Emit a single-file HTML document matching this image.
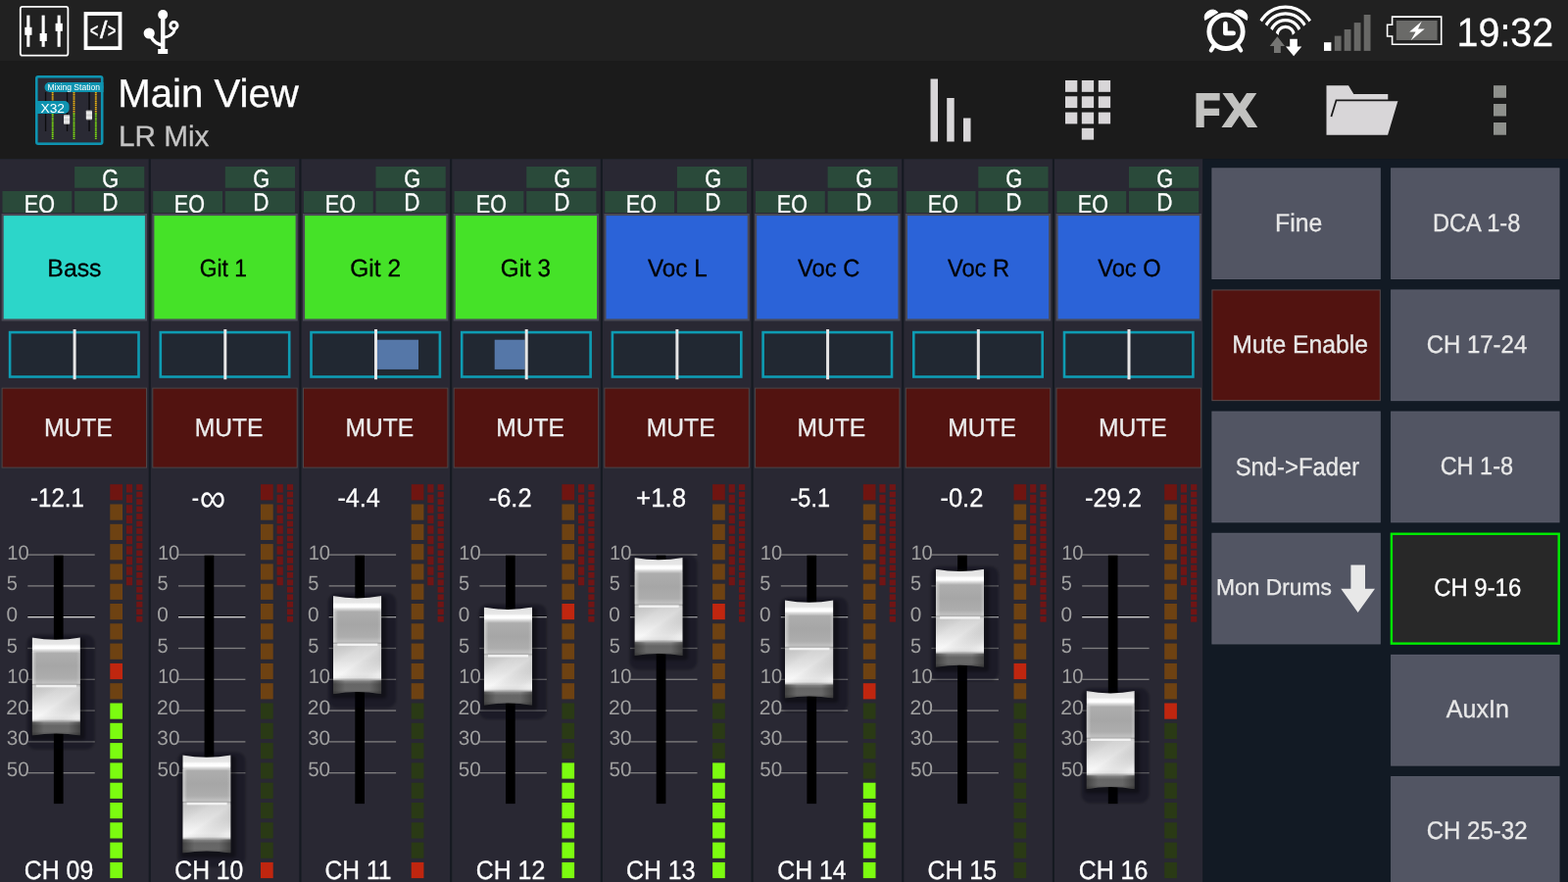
<!DOCTYPE html>
<html lang="en"><head><meta charset="utf-8"><title>Main View - LR Mix</title>
<style>
*{margin:0;padding:0;box-sizing:border-box}
html,body{width:1600px;height:900px;overflow:hidden;background:#121a24}
body{font-family:"Liberation Sans",sans-serif;position:relative;color:#fff}
.a{position:absolute}
.t{position:absolute;white-space:nowrap;line-height:1;transform-origin:0 0;-webkit-text-stroke:0.3px currentColor;text-rendering:geometricPrecision}
#all{position:absolute;left:0;top:0;width:1600px;height:900px;will-change:transform;overflow:hidden}
</style></head>
<body>
<div id="all">
<svg class="a" style="left:0;top:0" width="1600" height="900" viewBox="0 0 1600 900">
<defs>
<linearGradient id="kg" x1="0" y1="0" x2="0" y2="1">
<stop offset="0" stop-color="#c4c4c4"/><stop offset="0.025" stop-color="#e4e4e4"/><stop offset="0.07" stop-color="#e6e6e6"/><stop offset="0.09" stop-color="#fcfcfc"/><stop offset="0.115" stop-color="#ffffff"/>
<stop offset="0.135" stop-color="#dcdcdc"/><stop offset="0.165" stop-color="#adadad"/><stop offset="0.3" stop-color="#a6a6a6"/><stop offset="0.42" stop-color="#adadad"/>
<stop offset="0.465" stop-color="#c0c0c0"/><stop offset="0.485" stop-color="#a8a8a8"/><stop offset="0.495" stop-color="#d0d0d0"/><stop offset="0.52" stop-color="#cecece"/>
<stop offset="0.66" stop-color="#dedede"/><stop offset="0.8" stop-color="#f6f6f6"/><stop offset="0.835" stop-color="#f0f0f0"/><stop offset="0.87" stop-color="#808080"/>
<stop offset="0.9" stop-color="#666666"/><stop offset="0.96" stop-color="#686868"/><stop offset="1" stop-color="#505050"/>
</linearGradient>
<linearGradient id="kh" x1="0" y1="0" x2="1" y2="0">
<stop offset="0" stop-color="#fff" stop-opacity="0.45"/><stop offset="0.1" stop-color="#fff" stop-opacity="0"/><stop offset="0.92" stop-color="#fff" stop-opacity="0"/><stop offset="1" stop-color="#fff" stop-opacity="0.25"/>
</linearGradient>
<linearGradient id="kd" x1="0" y1="0" x2="1" y2="0">
<stop offset="0" stop-color="#000" stop-opacity="0.35"/><stop offset="0.25" stop-color="#000" stop-opacity="0"/><stop offset="0.75" stop-color="#000" stop-opacity="0"/><stop offset="1" stop-color="#000" stop-opacity="0.35"/>
</linearGradient>
<linearGradient id="kl" x1="0" y1="0" x2="1" y2="1">
<stop offset="0" stop-color="#000" stop-opacity="0.04"/><stop offset="0.3" stop-color="#fff" stop-opacity="0.1"/><stop offset="0.5" stop-color="#fff" stop-opacity="0.16"/><stop offset="0.8" stop-color="#000" stop-opacity="0.07"/><stop offset="1" stop-color="#fff" stop-opacity="0.08"/>
</linearGradient>
<filter id="kb" x="-30%" y="-20%" width="160%" height="140%"><feGaussianBlur stdDeviation="1.6"/></filter>
<filter id="kb2" x="-30%" y="-20%" width="160%" height="140%"><feGaussianBlur stdDeviation="0.9"/></filter>
<clipPath id="kc"><path d="M14.4 8Q14 8 14 8.4Q38.7 13 63.4 8.4Q63.4 8 63 8 63.4 8 63.4 8.4V108.1Q63.4 108.5 63 108.5Q38.7 104.3 14.4 108.5Q14 108.5 14 108.1V8.4Z"/></clipPath>
<g id="knob">
<rect x="9" y="5.4" width="69.2" height="117.4" rx="9" fill="#060608" opacity="0.3" filter="url(#kb2)"/>
<rect x="12.5" y="9" width="56" height="104" rx="3" fill="#000" opacity="0.36" filter="url(#kb)"/>
<g clip-path="url(#kc)">
<rect x="14" y="8" width="49.4" height="100.5" fill="url(#kg)"/>
<rect x="14" y="23" width="49.4" height="33" fill="url(#kh)"/>
<rect x="14" y="59" width="49.4" height="35" fill="url(#kl)"/>
<rect x="14" y="94.5" width="49.4" height="14" fill="url(#kd)"/>
<rect x="18.4" y="56.8" width="41" height="2.5" fill="#fff" opacity="0.72"/>
</g>
</g>
</defs>
<rect x="0.00" y="0.00" width="1600.00" height="62.00" fill="#212121"/>
<rect x="0.00" y="62.00" width="1600.00" height="100.20" fill="#1b1b1b"/>
<rect x="0.00" y="162.20" width="1227.40" height="738.00" fill="#292833"/>
<rect x="1227.40" y="162.20" width="372.60" height="738.00" fill="#121a24"/>
<rect x="151.70" y="162.20" width="2.10" height="738.00" fill="#151a21"/>
<rect x="76.10" y="170.00" width="71.20" height="21.70" fill="#2a4a3a"/>
<rect x="76.10" y="195.00" width="71.20" height="22.00" fill="#2a4a3a"/>
<rect x="2.50" y="195.00" width="70.80" height="22.00" fill="#2a4a3a"/>
<rect x="1.60" y="218.00" width="148.40" height="109.50" fill="#4a4a56"/>
<rect x="3.70" y="220.10" width="144.20" height="105.30" fill="#2cd6c9"/>
<rect x="8.80" y="337.80" width="134.00" height="48.00" fill="#0e9cb3"/>
<rect x="11.40" y="340.40" width="128.80" height="42.80" fill="#212832"/>
<rect x="74.60" y="336.00" width="3.00" height="51.20" fill="#e6e6e6"/>
<rect x="1.60" y="395.60" width="148.40" height="82.00" fill="#4c4648"/>
<rect x="2.60" y="396.60" width="146.40" height="80.00" fill="#521310"/>
<rect x="28.30" y="565.45" width="68.40" height="1.30" fill="#807f80"/>
<rect x="28.30" y="597.25" width="68.40" height="1.30" fill="#807f80"/>
<rect x="28.30" y="628.00" width="68.40" height="1.10" fill="#101014"/>
<rect x="28.30" y="629.05" width="68.40" height="1.30" fill="#d8d8d8"/>
<rect x="28.30" y="660.85" width="68.40" height="1.30" fill="#807f80"/>
<rect x="28.30" y="692.65" width="68.40" height="1.30" fill="#807f80"/>
<rect x="28.30" y="724.45" width="68.40" height="1.30" fill="#807f80"/>
<rect x="28.30" y="756.25" width="68.40" height="1.30" fill="#807f80"/>
<rect x="28.30" y="788.05" width="68.40" height="1.30" fill="#807f80"/>
<rect x="54.90" y="566.70" width="9.70" height="253.40" fill="#000"/>
<rect x="112.30" y="494.20" width="12.70" height="16.20" fill="#6f1511"/>
<rect x="112.30" y="514.50" width="12.70" height="16.20" fill="#6e4212"/>
<rect x="112.30" y="534.80" width="12.70" height="16.20" fill="#6e4212"/>
<rect x="112.30" y="555.10" width="12.70" height="16.20" fill="#6e4212"/>
<rect x="112.30" y="575.40" width="12.70" height="16.20" fill="#6e4212"/>
<rect x="112.30" y="595.70" width="12.70" height="16.20" fill="#6e4212"/>
<rect x="112.30" y="616.00" width="12.70" height="16.20" fill="#6e4212"/>
<rect x="112.30" y="636.30" width="12.70" height="16.20" fill="#6e4212"/>
<rect x="112.30" y="656.60" width="12.70" height="16.20" fill="#6e4212"/>
<rect x="112.30" y="676.90" width="12.70" height="16.20" fill="#c0260f"/>
<rect x="112.30" y="697.20" width="12.70" height="16.20" fill="#6e4212"/>
<rect x="112.30" y="717.50" width="12.70" height="16.20" fill="#7cfc10"/>
<rect x="112.30" y="737.80" width="12.70" height="16.20" fill="#7cfc10"/>
<rect x="112.30" y="758.10" width="12.70" height="16.20" fill="#7cfc10"/>
<rect x="112.30" y="778.40" width="12.70" height="16.20" fill="#7cfc10"/>
<rect x="112.30" y="798.70" width="12.70" height="16.20" fill="#7cfc10"/>
<rect x="112.30" y="819.00" width="12.70" height="16.20" fill="#7cfc10"/>
<rect x="112.30" y="839.30" width="12.70" height="16.20" fill="#7cfc10"/>
<rect x="112.30" y="859.60" width="12.70" height="16.20" fill="#7cfc10"/>
<rect x="112.30" y="879.90" width="12.70" height="16.20" fill="#7cfc10"/>
<rect x="128.90" y="494.20" width="6.20" height="8.40" fill="#701515"/>
<rect x="128.90" y="504.72" width="6.20" height="8.40" fill="#701515"/>
<rect x="128.90" y="515.24" width="6.20" height="8.40" fill="#701515"/>
<rect x="128.90" y="525.76" width="6.20" height="8.40" fill="#701515"/>
<rect x="128.90" y="536.28" width="6.20" height="8.40" fill="#701515"/>
<rect x="128.90" y="546.80" width="6.20" height="8.40" fill="#701515"/>
<rect x="128.90" y="557.32" width="6.20" height="8.40" fill="#701515"/>
<rect x="128.90" y="567.84" width="6.20" height="8.40" fill="#701515"/>
<rect x="128.90" y="578.36" width="6.20" height="8.40" fill="#701515"/>
<rect x="128.90" y="588.88" width="6.20" height="8.40" fill="#701515"/>
<rect x="139.20" y="494.20" width="6.20" height="5.80" fill="#701515"/>
<rect x="139.20" y="501.68" width="6.20" height="5.80" fill="#701515"/>
<rect x="139.20" y="509.16" width="6.20" height="5.80" fill="#701515"/>
<rect x="139.20" y="516.64" width="6.20" height="5.80" fill="#701515"/>
<rect x="139.20" y="524.12" width="6.20" height="5.80" fill="#701515"/>
<rect x="139.20" y="531.60" width="6.20" height="5.80" fill="#701515"/>
<rect x="139.20" y="539.08" width="6.20" height="5.80" fill="#701515"/>
<rect x="139.20" y="546.56" width="6.20" height="5.80" fill="#701515"/>
<rect x="139.20" y="554.04" width="6.20" height="5.80" fill="#701515"/>
<rect x="139.20" y="561.52" width="6.20" height="5.80" fill="#701515"/>
<rect x="139.20" y="569.00" width="6.20" height="5.80" fill="#701515"/>
<rect x="139.20" y="576.48" width="6.20" height="5.80" fill="#701515"/>
<rect x="139.20" y="583.96" width="6.20" height="5.80" fill="#701515"/>
<rect x="139.20" y="591.44" width="6.20" height="5.80" fill="#701515"/>
<rect x="139.20" y="598.92" width="6.20" height="5.80" fill="#701515"/>
<rect x="139.20" y="606.40" width="6.20" height="5.80" fill="#701515"/>
<rect x="139.20" y="613.88" width="6.20" height="5.80" fill="#701515"/>
<rect x="139.20" y="621.36" width="6.20" height="5.80" fill="#701515"/>
<rect x="139.20" y="628.84" width="6.20" height="5.80" fill="#701515"/>
<rect x="305.40" y="162.20" width="2.10" height="738.00" fill="#151a21"/>
<rect x="229.80" y="170.00" width="71.20" height="21.70" fill="#2a4a3a"/>
<rect x="229.80" y="195.00" width="71.20" height="22.00" fill="#2a4a3a"/>
<rect x="156.20" y="195.00" width="70.80" height="22.00" fill="#2a4a3a"/>
<rect x="155.30" y="218.00" width="148.40" height="109.50" fill="#4a4a56"/>
<rect x="157.40" y="220.10" width="144.20" height="105.30" fill="#45e228"/>
<rect x="162.50" y="337.80" width="134.00" height="48.00" fill="#0e9cb3"/>
<rect x="165.10" y="340.40" width="128.80" height="42.80" fill="#212832"/>
<rect x="228.30" y="336.00" width="3.00" height="51.20" fill="#e6e6e6"/>
<rect x="155.30" y="395.60" width="148.40" height="82.00" fill="#4c4648"/>
<rect x="156.30" y="396.60" width="146.40" height="80.00" fill="#521310"/>
<rect x="182.00" y="565.45" width="68.40" height="1.30" fill="#807f80"/>
<rect x="182.00" y="597.25" width="68.40" height="1.30" fill="#807f80"/>
<rect x="182.00" y="628.00" width="68.40" height="1.10" fill="#101014"/>
<rect x="182.00" y="629.05" width="68.40" height="1.30" fill="#d8d8d8"/>
<rect x="182.00" y="660.85" width="68.40" height="1.30" fill="#807f80"/>
<rect x="182.00" y="692.65" width="68.40" height="1.30" fill="#807f80"/>
<rect x="182.00" y="724.45" width="68.40" height="1.30" fill="#807f80"/>
<rect x="182.00" y="756.25" width="68.40" height="1.30" fill="#807f80"/>
<rect x="182.00" y="788.05" width="68.40" height="1.30" fill="#807f80"/>
<rect x="208.60" y="566.70" width="9.70" height="253.40" fill="#000"/>
<rect x="266.00" y="494.20" width="12.70" height="16.20" fill="#6f1511"/>
<rect x="266.00" y="514.50" width="12.70" height="16.20" fill="#6e4212"/>
<rect x="266.00" y="534.80" width="12.70" height="16.20" fill="#6e4212"/>
<rect x="266.00" y="555.10" width="12.70" height="16.20" fill="#6e4212"/>
<rect x="266.00" y="575.40" width="12.70" height="16.20" fill="#6e4212"/>
<rect x="266.00" y="595.70" width="12.70" height="16.20" fill="#6e4212"/>
<rect x="266.00" y="616.00" width="12.70" height="16.20" fill="#6e4212"/>
<rect x="266.00" y="636.30" width="12.70" height="16.20" fill="#6e4212"/>
<rect x="266.00" y="656.60" width="12.70" height="16.20" fill="#6e4212"/>
<rect x="266.00" y="676.90" width="12.70" height="16.20" fill="#6e4212"/>
<rect x="266.00" y="697.20" width="12.70" height="16.20" fill="#6e4212"/>
<rect x="266.00" y="717.50" width="12.70" height="16.20" fill="#2a3a15"/>
<rect x="266.00" y="737.80" width="12.70" height="16.20" fill="#2a3a15"/>
<rect x="266.00" y="758.10" width="12.70" height="16.20" fill="#2a3a15"/>
<rect x="266.00" y="778.40" width="12.70" height="16.20" fill="#2a3a15"/>
<rect x="266.00" y="798.70" width="12.70" height="16.20" fill="#2a3a15"/>
<rect x="266.00" y="819.00" width="12.70" height="16.20" fill="#2a3a15"/>
<rect x="266.00" y="839.30" width="12.70" height="16.20" fill="#2a3a15"/>
<rect x="266.00" y="859.60" width="12.70" height="16.20" fill="#2a3a15"/>
<rect x="266.00" y="879.90" width="12.70" height="16.20" fill="#c0260f"/>
<rect x="282.60" y="494.20" width="6.20" height="8.40" fill="#701515"/>
<rect x="282.60" y="504.72" width="6.20" height="8.40" fill="#701515"/>
<rect x="282.60" y="515.24" width="6.20" height="8.40" fill="#701515"/>
<rect x="282.60" y="525.76" width="6.20" height="8.40" fill="#701515"/>
<rect x="282.60" y="536.28" width="6.20" height="8.40" fill="#701515"/>
<rect x="282.60" y="546.80" width="6.20" height="8.40" fill="#701515"/>
<rect x="282.60" y="557.32" width="6.20" height="8.40" fill="#701515"/>
<rect x="282.60" y="567.84" width="6.20" height="8.40" fill="#701515"/>
<rect x="282.60" y="578.36" width="6.20" height="8.40" fill="#701515"/>
<rect x="282.60" y="588.88" width="6.20" height="8.40" fill="#701515"/>
<rect x="292.90" y="494.20" width="6.20" height="5.80" fill="#701515"/>
<rect x="292.90" y="501.68" width="6.20" height="5.80" fill="#701515"/>
<rect x="292.90" y="509.16" width="6.20" height="5.80" fill="#701515"/>
<rect x="292.90" y="516.64" width="6.20" height="5.80" fill="#701515"/>
<rect x="292.90" y="524.12" width="6.20" height="5.80" fill="#701515"/>
<rect x="292.90" y="531.60" width="6.20" height="5.80" fill="#701515"/>
<rect x="292.90" y="539.08" width="6.20" height="5.80" fill="#701515"/>
<rect x="292.90" y="546.56" width="6.20" height="5.80" fill="#701515"/>
<rect x="292.90" y="554.04" width="6.20" height="5.80" fill="#701515"/>
<rect x="292.90" y="561.52" width="6.20" height="5.80" fill="#701515"/>
<rect x="292.90" y="569.00" width="6.20" height="5.80" fill="#701515"/>
<rect x="292.90" y="576.48" width="6.20" height="5.80" fill="#701515"/>
<rect x="292.90" y="583.96" width="6.20" height="5.80" fill="#701515"/>
<rect x="292.90" y="591.44" width="6.20" height="5.80" fill="#701515"/>
<rect x="292.90" y="598.92" width="6.20" height="5.80" fill="#701515"/>
<rect x="292.90" y="606.40" width="6.20" height="5.80" fill="#701515"/>
<rect x="292.90" y="613.88" width="6.20" height="5.80" fill="#701515"/>
<rect x="292.90" y="621.36" width="6.20" height="5.80" fill="#701515"/>
<rect x="292.90" y="628.84" width="6.20" height="5.80" fill="#701515"/>
<rect x="459.10" y="162.20" width="2.10" height="738.00" fill="#151a21"/>
<rect x="383.50" y="170.00" width="71.20" height="21.70" fill="#2a4a3a"/>
<rect x="383.50" y="195.00" width="71.20" height="22.00" fill="#2a4a3a"/>
<rect x="309.90" y="195.00" width="70.80" height="22.00" fill="#2a4a3a"/>
<rect x="309.00" y="218.00" width="148.40" height="109.50" fill="#4a4a56"/>
<rect x="311.10" y="220.10" width="144.20" height="105.30" fill="#45e228"/>
<rect x="316.20" y="337.80" width="134.00" height="48.00" fill="#0e9cb3"/>
<rect x="318.80" y="340.40" width="128.80" height="42.80" fill="#212832"/>
<rect x="385.00" y="346.70" width="42.00" height="30.20" fill="#5577a8"/>
<rect x="382.00" y="336.00" width="3.00" height="51.20" fill="#e6e6e6"/>
<rect x="309.00" y="395.60" width="148.40" height="82.00" fill="#4c4648"/>
<rect x="310.00" y="396.60" width="146.40" height="80.00" fill="#521310"/>
<rect x="335.70" y="565.45" width="68.40" height="1.30" fill="#807f80"/>
<rect x="335.70" y="597.25" width="68.40" height="1.30" fill="#807f80"/>
<rect x="335.70" y="628.00" width="68.40" height="1.10" fill="#101014"/>
<rect x="335.70" y="629.05" width="68.40" height="1.30" fill="#d8d8d8"/>
<rect x="335.70" y="660.85" width="68.40" height="1.30" fill="#807f80"/>
<rect x="335.70" y="692.65" width="68.40" height="1.30" fill="#807f80"/>
<rect x="335.70" y="724.45" width="68.40" height="1.30" fill="#807f80"/>
<rect x="335.70" y="756.25" width="68.40" height="1.30" fill="#807f80"/>
<rect x="335.70" y="788.05" width="68.40" height="1.30" fill="#807f80"/>
<rect x="362.30" y="566.70" width="9.70" height="253.40" fill="#000"/>
<rect x="419.70" y="494.20" width="12.70" height="16.20" fill="#6f1511"/>
<rect x="419.70" y="514.50" width="12.70" height="16.20" fill="#6e4212"/>
<rect x="419.70" y="534.80" width="12.70" height="16.20" fill="#6e4212"/>
<rect x="419.70" y="555.10" width="12.70" height="16.20" fill="#6e4212"/>
<rect x="419.70" y="575.40" width="12.70" height="16.20" fill="#6e4212"/>
<rect x="419.70" y="595.70" width="12.70" height="16.20" fill="#6e4212"/>
<rect x="419.70" y="616.00" width="12.70" height="16.20" fill="#6e4212"/>
<rect x="419.70" y="636.30" width="12.70" height="16.20" fill="#6e4212"/>
<rect x="419.70" y="656.60" width="12.70" height="16.20" fill="#6e4212"/>
<rect x="419.70" y="676.90" width="12.70" height="16.20" fill="#6e4212"/>
<rect x="419.70" y="697.20" width="12.70" height="16.20" fill="#6e4212"/>
<rect x="419.70" y="717.50" width="12.70" height="16.20" fill="#2a3a15"/>
<rect x="419.70" y="737.80" width="12.70" height="16.20" fill="#2a3a15"/>
<rect x="419.70" y="758.10" width="12.70" height="16.20" fill="#2a3a15"/>
<rect x="419.70" y="778.40" width="12.70" height="16.20" fill="#2a3a15"/>
<rect x="419.70" y="798.70" width="12.70" height="16.20" fill="#2a3a15"/>
<rect x="419.70" y="819.00" width="12.70" height="16.20" fill="#2a3a15"/>
<rect x="419.70" y="839.30" width="12.70" height="16.20" fill="#2a3a15"/>
<rect x="419.70" y="859.60" width="12.70" height="16.20" fill="#2a3a15"/>
<rect x="419.70" y="879.90" width="12.70" height="16.20" fill="#c0260f"/>
<rect x="436.30" y="494.20" width="6.20" height="8.40" fill="#701515"/>
<rect x="436.30" y="504.72" width="6.20" height="8.40" fill="#701515"/>
<rect x="436.30" y="515.24" width="6.20" height="8.40" fill="#701515"/>
<rect x="436.30" y="525.76" width="6.20" height="8.40" fill="#701515"/>
<rect x="436.30" y="536.28" width="6.20" height="8.40" fill="#701515"/>
<rect x="436.30" y="546.80" width="6.20" height="8.40" fill="#701515"/>
<rect x="436.30" y="557.32" width="6.20" height="8.40" fill="#701515"/>
<rect x="436.30" y="567.84" width="6.20" height="8.40" fill="#701515"/>
<rect x="436.30" y="578.36" width="6.20" height="8.40" fill="#701515"/>
<rect x="436.30" y="588.88" width="6.20" height="8.40" fill="#701515"/>
<rect x="446.60" y="494.20" width="6.20" height="5.80" fill="#701515"/>
<rect x="446.60" y="501.68" width="6.20" height="5.80" fill="#701515"/>
<rect x="446.60" y="509.16" width="6.20" height="5.80" fill="#701515"/>
<rect x="446.60" y="516.64" width="6.20" height="5.80" fill="#701515"/>
<rect x="446.60" y="524.12" width="6.20" height="5.80" fill="#701515"/>
<rect x="446.60" y="531.60" width="6.20" height="5.80" fill="#701515"/>
<rect x="446.60" y="539.08" width="6.20" height="5.80" fill="#701515"/>
<rect x="446.60" y="546.56" width="6.20" height="5.80" fill="#701515"/>
<rect x="446.60" y="554.04" width="6.20" height="5.80" fill="#701515"/>
<rect x="446.60" y="561.52" width="6.20" height="5.80" fill="#701515"/>
<rect x="446.60" y="569.00" width="6.20" height="5.80" fill="#701515"/>
<rect x="446.60" y="576.48" width="6.20" height="5.80" fill="#701515"/>
<rect x="446.60" y="583.96" width="6.20" height="5.80" fill="#701515"/>
<rect x="446.60" y="591.44" width="6.20" height="5.80" fill="#701515"/>
<rect x="446.60" y="598.92" width="6.20" height="5.80" fill="#701515"/>
<rect x="446.60" y="606.40" width="6.20" height="5.80" fill="#701515"/>
<rect x="446.60" y="613.88" width="6.20" height="5.80" fill="#701515"/>
<rect x="446.60" y="621.36" width="6.20" height="5.80" fill="#701515"/>
<rect x="446.60" y="628.84" width="6.20" height="5.80" fill="#701515"/>
<rect x="612.80" y="162.20" width="2.10" height="738.00" fill="#151a21"/>
<rect x="537.20" y="170.00" width="71.20" height="21.70" fill="#2a4a3a"/>
<rect x="537.20" y="195.00" width="71.20" height="22.00" fill="#2a4a3a"/>
<rect x="463.60" y="195.00" width="70.80" height="22.00" fill="#2a4a3a"/>
<rect x="462.70" y="218.00" width="148.40" height="109.50" fill="#4a4a56"/>
<rect x="464.80" y="220.10" width="144.20" height="105.30" fill="#45e228"/>
<rect x="469.90" y="337.80" width="134.00" height="48.00" fill="#0e9cb3"/>
<rect x="472.50" y="340.40" width="128.80" height="42.80" fill="#212832"/>
<rect x="504.70" y="346.70" width="31.00" height="30.20" fill="#5577a8"/>
<rect x="535.70" y="336.00" width="3.00" height="51.20" fill="#e6e6e6"/>
<rect x="462.70" y="395.60" width="148.40" height="82.00" fill="#4c4648"/>
<rect x="463.70" y="396.60" width="146.40" height="80.00" fill="#521310"/>
<rect x="489.40" y="565.45" width="68.40" height="1.30" fill="#807f80"/>
<rect x="489.40" y="597.25" width="68.40" height="1.30" fill="#807f80"/>
<rect x="489.40" y="628.00" width="68.40" height="1.10" fill="#101014"/>
<rect x="489.40" y="629.05" width="68.40" height="1.30" fill="#d8d8d8"/>
<rect x="489.40" y="660.85" width="68.40" height="1.30" fill="#807f80"/>
<rect x="489.40" y="692.65" width="68.40" height="1.30" fill="#807f80"/>
<rect x="489.40" y="724.45" width="68.40" height="1.30" fill="#807f80"/>
<rect x="489.40" y="756.25" width="68.40" height="1.30" fill="#807f80"/>
<rect x="489.40" y="788.05" width="68.40" height="1.30" fill="#807f80"/>
<rect x="516.00" y="566.70" width="9.70" height="253.40" fill="#000"/>
<rect x="573.40" y="494.20" width="12.70" height="16.20" fill="#6f1511"/>
<rect x="573.40" y="514.50" width="12.70" height="16.20" fill="#6e4212"/>
<rect x="573.40" y="534.80" width="12.70" height="16.20" fill="#6e4212"/>
<rect x="573.40" y="555.10" width="12.70" height="16.20" fill="#6e4212"/>
<rect x="573.40" y="575.40" width="12.70" height="16.20" fill="#6e4212"/>
<rect x="573.40" y="595.70" width="12.70" height="16.20" fill="#6e4212"/>
<rect x="573.40" y="616.00" width="12.70" height="16.20" fill="#c0260f"/>
<rect x="573.40" y="636.30" width="12.70" height="16.20" fill="#6e4212"/>
<rect x="573.40" y="656.60" width="12.70" height="16.20" fill="#6e4212"/>
<rect x="573.40" y="676.90" width="12.70" height="16.20" fill="#6e4212"/>
<rect x="573.40" y="697.20" width="12.70" height="16.20" fill="#6e4212"/>
<rect x="573.40" y="717.50" width="12.70" height="16.20" fill="#2a3a15"/>
<rect x="573.40" y="737.80" width="12.70" height="16.20" fill="#2a3a15"/>
<rect x="573.40" y="758.10" width="12.70" height="16.20" fill="#2a3a15"/>
<rect x="573.40" y="778.40" width="12.70" height="16.20" fill="#7cfc10"/>
<rect x="573.40" y="798.70" width="12.70" height="16.20" fill="#7cfc10"/>
<rect x="573.40" y="819.00" width="12.70" height="16.20" fill="#7cfc10"/>
<rect x="573.40" y="839.30" width="12.70" height="16.20" fill="#7cfc10"/>
<rect x="573.40" y="859.60" width="12.70" height="16.20" fill="#7cfc10"/>
<rect x="573.40" y="879.90" width="12.70" height="16.20" fill="#7cfc10"/>
<rect x="590.00" y="494.20" width="6.20" height="8.40" fill="#701515"/>
<rect x="590.00" y="504.72" width="6.20" height="8.40" fill="#701515"/>
<rect x="590.00" y="515.24" width="6.20" height="8.40" fill="#701515"/>
<rect x="590.00" y="525.76" width="6.20" height="8.40" fill="#701515"/>
<rect x="590.00" y="536.28" width="6.20" height="8.40" fill="#701515"/>
<rect x="590.00" y="546.80" width="6.20" height="8.40" fill="#701515"/>
<rect x="590.00" y="557.32" width="6.20" height="8.40" fill="#701515"/>
<rect x="590.00" y="567.84" width="6.20" height="8.40" fill="#701515"/>
<rect x="590.00" y="578.36" width="6.20" height="8.40" fill="#701515"/>
<rect x="590.00" y="588.88" width="6.20" height="8.40" fill="#701515"/>
<rect x="600.30" y="494.20" width="6.20" height="5.80" fill="#701515"/>
<rect x="600.30" y="501.68" width="6.20" height="5.80" fill="#701515"/>
<rect x="600.30" y="509.16" width="6.20" height="5.80" fill="#701515"/>
<rect x="600.30" y="516.64" width="6.20" height="5.80" fill="#701515"/>
<rect x="600.30" y="524.12" width="6.20" height="5.80" fill="#701515"/>
<rect x="600.30" y="531.60" width="6.20" height="5.80" fill="#701515"/>
<rect x="600.30" y="539.08" width="6.20" height="5.80" fill="#701515"/>
<rect x="600.30" y="546.56" width="6.20" height="5.80" fill="#701515"/>
<rect x="600.30" y="554.04" width="6.20" height="5.80" fill="#701515"/>
<rect x="600.30" y="561.52" width="6.20" height="5.80" fill="#701515"/>
<rect x="600.30" y="569.00" width="6.20" height="5.80" fill="#701515"/>
<rect x="600.30" y="576.48" width="6.20" height="5.80" fill="#701515"/>
<rect x="600.30" y="583.96" width="6.20" height="5.80" fill="#701515"/>
<rect x="600.30" y="591.44" width="6.20" height="5.80" fill="#701515"/>
<rect x="600.30" y="598.92" width="6.20" height="5.80" fill="#701515"/>
<rect x="600.30" y="606.40" width="6.20" height="5.80" fill="#701515"/>
<rect x="600.30" y="613.88" width="6.20" height="5.80" fill="#701515"/>
<rect x="600.30" y="621.36" width="6.20" height="5.80" fill="#701515"/>
<rect x="600.30" y="628.84" width="6.20" height="5.80" fill="#701515"/>
<rect x="766.50" y="162.20" width="2.10" height="738.00" fill="#151a21"/>
<rect x="690.90" y="170.00" width="71.20" height="21.70" fill="#2a4a3a"/>
<rect x="690.90" y="195.00" width="71.20" height="22.00" fill="#2a4a3a"/>
<rect x="617.30" y="195.00" width="70.80" height="22.00" fill="#2a4a3a"/>
<rect x="616.40" y="218.00" width="148.40" height="109.50" fill="#4a4a56"/>
<rect x="618.50" y="220.10" width="144.20" height="105.30" fill="#2b63d8"/>
<rect x="623.60" y="337.80" width="134.00" height="48.00" fill="#0e9cb3"/>
<rect x="626.20" y="340.40" width="128.80" height="42.80" fill="#212832"/>
<rect x="689.40" y="336.00" width="3.00" height="51.20" fill="#e6e6e6"/>
<rect x="616.40" y="395.60" width="148.40" height="82.00" fill="#4c4648"/>
<rect x="617.40" y="396.60" width="146.40" height="80.00" fill="#521310"/>
<rect x="643.10" y="565.45" width="68.40" height="1.30" fill="#807f80"/>
<rect x="643.10" y="597.25" width="68.40" height="1.30" fill="#807f80"/>
<rect x="643.10" y="628.00" width="68.40" height="1.10" fill="#101014"/>
<rect x="643.10" y="629.05" width="68.40" height="1.30" fill="#d8d8d8"/>
<rect x="643.10" y="660.85" width="68.40" height="1.30" fill="#807f80"/>
<rect x="643.10" y="692.65" width="68.40" height="1.30" fill="#807f80"/>
<rect x="643.10" y="724.45" width="68.40" height="1.30" fill="#807f80"/>
<rect x="643.10" y="756.25" width="68.40" height="1.30" fill="#807f80"/>
<rect x="643.10" y="788.05" width="68.40" height="1.30" fill="#807f80"/>
<rect x="669.70" y="566.70" width="9.70" height="253.40" fill="#000"/>
<rect x="727.10" y="494.20" width="12.70" height="16.20" fill="#6f1511"/>
<rect x="727.10" y="514.50" width="12.70" height="16.20" fill="#6e4212"/>
<rect x="727.10" y="534.80" width="12.70" height="16.20" fill="#6e4212"/>
<rect x="727.10" y="555.10" width="12.70" height="16.20" fill="#6e4212"/>
<rect x="727.10" y="575.40" width="12.70" height="16.20" fill="#6e4212"/>
<rect x="727.10" y="595.70" width="12.70" height="16.20" fill="#6e4212"/>
<rect x="727.10" y="616.00" width="12.70" height="16.20" fill="#c0260f"/>
<rect x="727.10" y="636.30" width="12.70" height="16.20" fill="#6e4212"/>
<rect x="727.10" y="656.60" width="12.70" height="16.20" fill="#6e4212"/>
<rect x="727.10" y="676.90" width="12.70" height="16.20" fill="#6e4212"/>
<rect x="727.10" y="697.20" width="12.70" height="16.20" fill="#6e4212"/>
<rect x="727.10" y="717.50" width="12.70" height="16.20" fill="#2a3a15"/>
<rect x="727.10" y="737.80" width="12.70" height="16.20" fill="#2a3a15"/>
<rect x="727.10" y="758.10" width="12.70" height="16.20" fill="#2a3a15"/>
<rect x="727.10" y="778.40" width="12.70" height="16.20" fill="#7cfc10"/>
<rect x="727.10" y="798.70" width="12.70" height="16.20" fill="#7cfc10"/>
<rect x="727.10" y="819.00" width="12.70" height="16.20" fill="#7cfc10"/>
<rect x="727.10" y="839.30" width="12.70" height="16.20" fill="#7cfc10"/>
<rect x="727.10" y="859.60" width="12.70" height="16.20" fill="#7cfc10"/>
<rect x="727.10" y="879.90" width="12.70" height="16.20" fill="#7cfc10"/>
<rect x="743.70" y="494.20" width="6.20" height="8.40" fill="#701515"/>
<rect x="743.70" y="504.72" width="6.20" height="8.40" fill="#701515"/>
<rect x="743.70" y="515.24" width="6.20" height="8.40" fill="#701515"/>
<rect x="743.70" y="525.76" width="6.20" height="8.40" fill="#701515"/>
<rect x="743.70" y="536.28" width="6.20" height="8.40" fill="#701515"/>
<rect x="743.70" y="546.80" width="6.20" height="8.40" fill="#701515"/>
<rect x="743.70" y="557.32" width="6.20" height="8.40" fill="#701515"/>
<rect x="743.70" y="567.84" width="6.20" height="8.40" fill="#701515"/>
<rect x="743.70" y="578.36" width="6.20" height="8.40" fill="#701515"/>
<rect x="743.70" y="588.88" width="6.20" height="8.40" fill="#701515"/>
<rect x="754.00" y="494.20" width="6.20" height="5.80" fill="#701515"/>
<rect x="754.00" y="501.68" width="6.20" height="5.80" fill="#701515"/>
<rect x="754.00" y="509.16" width="6.20" height="5.80" fill="#701515"/>
<rect x="754.00" y="516.64" width="6.20" height="5.80" fill="#701515"/>
<rect x="754.00" y="524.12" width="6.20" height="5.80" fill="#701515"/>
<rect x="754.00" y="531.60" width="6.20" height="5.80" fill="#701515"/>
<rect x="754.00" y="539.08" width="6.20" height="5.80" fill="#701515"/>
<rect x="754.00" y="546.56" width="6.20" height="5.80" fill="#701515"/>
<rect x="754.00" y="554.04" width="6.20" height="5.80" fill="#701515"/>
<rect x="754.00" y="561.52" width="6.20" height="5.80" fill="#701515"/>
<rect x="754.00" y="569.00" width="6.20" height="5.80" fill="#701515"/>
<rect x="754.00" y="576.48" width="6.20" height="5.80" fill="#701515"/>
<rect x="754.00" y="583.96" width="6.20" height="5.80" fill="#701515"/>
<rect x="754.00" y="591.44" width="6.20" height="5.80" fill="#701515"/>
<rect x="754.00" y="598.92" width="6.20" height="5.80" fill="#701515"/>
<rect x="754.00" y="606.40" width="6.20" height="5.80" fill="#701515"/>
<rect x="754.00" y="613.88" width="6.20" height="5.80" fill="#701515"/>
<rect x="754.00" y="621.36" width="6.20" height="5.80" fill="#701515"/>
<rect x="754.00" y="628.84" width="6.20" height="5.80" fill="#701515"/>
<rect x="920.20" y="162.20" width="2.10" height="738.00" fill="#151a21"/>
<rect x="844.60" y="170.00" width="71.20" height="21.70" fill="#2a4a3a"/>
<rect x="844.60" y="195.00" width="71.20" height="22.00" fill="#2a4a3a"/>
<rect x="771.00" y="195.00" width="70.80" height="22.00" fill="#2a4a3a"/>
<rect x="770.10" y="218.00" width="148.40" height="109.50" fill="#4a4a56"/>
<rect x="772.20" y="220.10" width="144.20" height="105.30" fill="#2b63d8"/>
<rect x="777.30" y="337.80" width="134.00" height="48.00" fill="#0e9cb3"/>
<rect x="779.90" y="340.40" width="128.80" height="42.80" fill="#212832"/>
<rect x="843.10" y="336.00" width="3.00" height="51.20" fill="#e6e6e6"/>
<rect x="770.10" y="395.60" width="148.40" height="82.00" fill="#4c4648"/>
<rect x="771.10" y="396.60" width="146.40" height="80.00" fill="#521310"/>
<rect x="796.80" y="565.45" width="68.40" height="1.30" fill="#807f80"/>
<rect x="796.80" y="597.25" width="68.40" height="1.30" fill="#807f80"/>
<rect x="796.80" y="628.00" width="68.40" height="1.10" fill="#101014"/>
<rect x="796.80" y="629.05" width="68.40" height="1.30" fill="#d8d8d8"/>
<rect x="796.80" y="660.85" width="68.40" height="1.30" fill="#807f80"/>
<rect x="796.80" y="692.65" width="68.40" height="1.30" fill="#807f80"/>
<rect x="796.80" y="724.45" width="68.40" height="1.30" fill="#807f80"/>
<rect x="796.80" y="756.25" width="68.40" height="1.30" fill="#807f80"/>
<rect x="796.80" y="788.05" width="68.40" height="1.30" fill="#807f80"/>
<rect x="823.40" y="566.70" width="9.70" height="253.40" fill="#000"/>
<rect x="880.80" y="494.20" width="12.70" height="16.20" fill="#6f1511"/>
<rect x="880.80" y="514.50" width="12.70" height="16.20" fill="#6e4212"/>
<rect x="880.80" y="534.80" width="12.70" height="16.20" fill="#6e4212"/>
<rect x="880.80" y="555.10" width="12.70" height="16.20" fill="#6e4212"/>
<rect x="880.80" y="575.40" width="12.70" height="16.20" fill="#6e4212"/>
<rect x="880.80" y="595.70" width="12.70" height="16.20" fill="#6e4212"/>
<rect x="880.80" y="616.00" width="12.70" height="16.20" fill="#6e4212"/>
<rect x="880.80" y="636.30" width="12.70" height="16.20" fill="#6e4212"/>
<rect x="880.80" y="656.60" width="12.70" height="16.20" fill="#6e4212"/>
<rect x="880.80" y="676.90" width="12.70" height="16.20" fill="#6e4212"/>
<rect x="880.80" y="697.20" width="12.70" height="16.20" fill="#c0260f"/>
<rect x="880.80" y="717.50" width="12.70" height="16.20" fill="#2a3a15"/>
<rect x="880.80" y="737.80" width="12.70" height="16.20" fill="#2a3a15"/>
<rect x="880.80" y="758.10" width="12.70" height="16.20" fill="#2a3a15"/>
<rect x="880.80" y="778.40" width="12.70" height="16.20" fill="#2a3a15"/>
<rect x="880.80" y="798.70" width="12.70" height="16.20" fill="#7cfc10"/>
<rect x="880.80" y="819.00" width="12.70" height="16.20" fill="#7cfc10"/>
<rect x="880.80" y="839.30" width="12.70" height="16.20" fill="#7cfc10"/>
<rect x="880.80" y="859.60" width="12.70" height="16.20" fill="#7cfc10"/>
<rect x="880.80" y="879.90" width="12.70" height="16.20" fill="#7cfc10"/>
<rect x="897.40" y="494.20" width="6.20" height="8.40" fill="#701515"/>
<rect x="897.40" y="504.72" width="6.20" height="8.40" fill="#701515"/>
<rect x="897.40" y="515.24" width="6.20" height="8.40" fill="#701515"/>
<rect x="897.40" y="525.76" width="6.20" height="8.40" fill="#701515"/>
<rect x="897.40" y="536.28" width="6.20" height="8.40" fill="#701515"/>
<rect x="897.40" y="546.80" width="6.20" height="8.40" fill="#701515"/>
<rect x="897.40" y="557.32" width="6.20" height="8.40" fill="#701515"/>
<rect x="897.40" y="567.84" width="6.20" height="8.40" fill="#701515"/>
<rect x="897.40" y="578.36" width="6.20" height="8.40" fill="#701515"/>
<rect x="897.40" y="588.88" width="6.20" height="8.40" fill="#701515"/>
<rect x="907.70" y="494.20" width="6.20" height="5.80" fill="#701515"/>
<rect x="907.70" y="501.68" width="6.20" height="5.80" fill="#701515"/>
<rect x="907.70" y="509.16" width="6.20" height="5.80" fill="#701515"/>
<rect x="907.70" y="516.64" width="6.20" height="5.80" fill="#701515"/>
<rect x="907.70" y="524.12" width="6.20" height="5.80" fill="#701515"/>
<rect x="907.70" y="531.60" width="6.20" height="5.80" fill="#701515"/>
<rect x="907.70" y="539.08" width="6.20" height="5.80" fill="#701515"/>
<rect x="907.70" y="546.56" width="6.20" height="5.80" fill="#701515"/>
<rect x="907.70" y="554.04" width="6.20" height="5.80" fill="#701515"/>
<rect x="907.70" y="561.52" width="6.20" height="5.80" fill="#701515"/>
<rect x="907.70" y="569.00" width="6.20" height="5.80" fill="#701515"/>
<rect x="907.70" y="576.48" width="6.20" height="5.80" fill="#701515"/>
<rect x="907.70" y="583.96" width="6.20" height="5.80" fill="#701515"/>
<rect x="907.70" y="591.44" width="6.20" height="5.80" fill="#701515"/>
<rect x="907.70" y="598.92" width="6.20" height="5.80" fill="#701515"/>
<rect x="907.70" y="606.40" width="6.20" height="5.80" fill="#701515"/>
<rect x="907.70" y="613.88" width="6.20" height="5.80" fill="#701515"/>
<rect x="907.70" y="621.36" width="6.20" height="5.80" fill="#701515"/>
<rect x="907.70" y="628.84" width="6.20" height="5.80" fill="#701515"/>
<rect x="1073.90" y="162.20" width="2.10" height="738.00" fill="#151a21"/>
<rect x="998.30" y="170.00" width="71.20" height="21.70" fill="#2a4a3a"/>
<rect x="998.30" y="195.00" width="71.20" height="22.00" fill="#2a4a3a"/>
<rect x="924.70" y="195.00" width="70.80" height="22.00" fill="#2a4a3a"/>
<rect x="923.80" y="218.00" width="148.40" height="109.50" fill="#4a4a56"/>
<rect x="925.90" y="220.10" width="144.20" height="105.30" fill="#2b63d8"/>
<rect x="931.00" y="337.80" width="134.00" height="48.00" fill="#0e9cb3"/>
<rect x="933.60" y="340.40" width="128.80" height="42.80" fill="#212832"/>
<rect x="996.80" y="336.00" width="3.00" height="51.20" fill="#e6e6e6"/>
<rect x="923.80" y="395.60" width="148.40" height="82.00" fill="#4c4648"/>
<rect x="924.80" y="396.60" width="146.40" height="80.00" fill="#521310"/>
<rect x="950.50" y="565.45" width="68.40" height="1.30" fill="#807f80"/>
<rect x="950.50" y="597.25" width="68.40" height="1.30" fill="#807f80"/>
<rect x="950.50" y="628.00" width="68.40" height="1.10" fill="#101014"/>
<rect x="950.50" y="629.05" width="68.40" height="1.30" fill="#d8d8d8"/>
<rect x="950.50" y="660.85" width="68.40" height="1.30" fill="#807f80"/>
<rect x="950.50" y="692.65" width="68.40" height="1.30" fill="#807f80"/>
<rect x="950.50" y="724.45" width="68.40" height="1.30" fill="#807f80"/>
<rect x="950.50" y="756.25" width="68.40" height="1.30" fill="#807f80"/>
<rect x="950.50" y="788.05" width="68.40" height="1.30" fill="#807f80"/>
<rect x="977.10" y="566.70" width="9.70" height="253.40" fill="#000"/>
<rect x="1034.50" y="494.20" width="12.70" height="16.20" fill="#6f1511"/>
<rect x="1034.50" y="514.50" width="12.70" height="16.20" fill="#6e4212"/>
<rect x="1034.50" y="534.80" width="12.70" height="16.20" fill="#6e4212"/>
<rect x="1034.50" y="555.10" width="12.70" height="16.20" fill="#6e4212"/>
<rect x="1034.50" y="575.40" width="12.70" height="16.20" fill="#6e4212"/>
<rect x="1034.50" y="595.70" width="12.70" height="16.20" fill="#6e4212"/>
<rect x="1034.50" y="616.00" width="12.70" height="16.20" fill="#6e4212"/>
<rect x="1034.50" y="636.30" width="12.70" height="16.20" fill="#6e4212"/>
<rect x="1034.50" y="656.60" width="12.70" height="16.20" fill="#6e4212"/>
<rect x="1034.50" y="676.90" width="12.70" height="16.20" fill="#c0260f"/>
<rect x="1034.50" y="697.20" width="12.70" height="16.20" fill="#6e4212"/>
<rect x="1034.50" y="717.50" width="12.70" height="16.20" fill="#2a3a15"/>
<rect x="1034.50" y="737.80" width="12.70" height="16.20" fill="#2a3a15"/>
<rect x="1034.50" y="758.10" width="12.70" height="16.20" fill="#2a3a15"/>
<rect x="1034.50" y="778.40" width="12.70" height="16.20" fill="#2a3a15"/>
<rect x="1034.50" y="798.70" width="12.70" height="16.20" fill="#2a3a15"/>
<rect x="1034.50" y="819.00" width="12.70" height="16.20" fill="#2a3a15"/>
<rect x="1034.50" y="839.30" width="12.70" height="16.20" fill="#2a3a15"/>
<rect x="1034.50" y="859.60" width="12.70" height="16.20" fill="#2a3a15"/>
<rect x="1034.50" y="879.90" width="12.70" height="16.20" fill="#2a3a15"/>
<rect x="1051.10" y="494.20" width="6.20" height="8.40" fill="#701515"/>
<rect x="1051.10" y="504.72" width="6.20" height="8.40" fill="#701515"/>
<rect x="1051.10" y="515.24" width="6.20" height="8.40" fill="#701515"/>
<rect x="1051.10" y="525.76" width="6.20" height="8.40" fill="#701515"/>
<rect x="1051.10" y="536.28" width="6.20" height="8.40" fill="#701515"/>
<rect x="1051.10" y="546.80" width="6.20" height="8.40" fill="#701515"/>
<rect x="1051.10" y="557.32" width="6.20" height="8.40" fill="#701515"/>
<rect x="1051.10" y="567.84" width="6.20" height="8.40" fill="#701515"/>
<rect x="1051.10" y="578.36" width="6.20" height="8.40" fill="#701515"/>
<rect x="1051.10" y="588.88" width="6.20" height="8.40" fill="#701515"/>
<rect x="1061.40" y="494.20" width="6.20" height="5.80" fill="#701515"/>
<rect x="1061.40" y="501.68" width="6.20" height="5.80" fill="#701515"/>
<rect x="1061.40" y="509.16" width="6.20" height="5.80" fill="#701515"/>
<rect x="1061.40" y="516.64" width="6.20" height="5.80" fill="#701515"/>
<rect x="1061.40" y="524.12" width="6.20" height="5.80" fill="#701515"/>
<rect x="1061.40" y="531.60" width="6.20" height="5.80" fill="#701515"/>
<rect x="1061.40" y="539.08" width="6.20" height="5.80" fill="#701515"/>
<rect x="1061.40" y="546.56" width="6.20" height="5.80" fill="#701515"/>
<rect x="1061.40" y="554.04" width="6.20" height="5.80" fill="#701515"/>
<rect x="1061.40" y="561.52" width="6.20" height="5.80" fill="#701515"/>
<rect x="1061.40" y="569.00" width="6.20" height="5.80" fill="#701515"/>
<rect x="1061.40" y="576.48" width="6.20" height="5.80" fill="#701515"/>
<rect x="1061.40" y="583.96" width="6.20" height="5.80" fill="#701515"/>
<rect x="1061.40" y="591.44" width="6.20" height="5.80" fill="#701515"/>
<rect x="1061.40" y="598.92" width="6.20" height="5.80" fill="#701515"/>
<rect x="1061.40" y="606.40" width="6.20" height="5.80" fill="#701515"/>
<rect x="1061.40" y="613.88" width="6.20" height="5.80" fill="#701515"/>
<rect x="1061.40" y="621.36" width="6.20" height="5.80" fill="#701515"/>
<rect x="1061.40" y="628.84" width="6.20" height="5.80" fill="#701515"/>
<rect x="1152.00" y="170.00" width="71.20" height="21.70" fill="#2a4a3a"/>
<rect x="1152.00" y="195.00" width="71.20" height="22.00" fill="#2a4a3a"/>
<rect x="1078.40" y="195.00" width="70.80" height="22.00" fill="#2a4a3a"/>
<rect x="1077.50" y="218.00" width="148.40" height="109.50" fill="#4a4a56"/>
<rect x="1079.60" y="220.10" width="144.20" height="105.30" fill="#2b63d8"/>
<rect x="1084.70" y="337.80" width="134.00" height="48.00" fill="#0e9cb3"/>
<rect x="1087.30" y="340.40" width="128.80" height="42.80" fill="#212832"/>
<rect x="1150.50" y="336.00" width="3.00" height="51.20" fill="#e6e6e6"/>
<rect x="1077.50" y="395.60" width="148.40" height="82.00" fill="#4c4648"/>
<rect x="1078.50" y="396.60" width="146.40" height="80.00" fill="#521310"/>
<rect x="1104.20" y="565.45" width="68.40" height="1.30" fill="#807f80"/>
<rect x="1104.20" y="597.25" width="68.40" height="1.30" fill="#807f80"/>
<rect x="1104.20" y="628.00" width="68.40" height="1.10" fill="#101014"/>
<rect x="1104.20" y="629.05" width="68.40" height="1.30" fill="#d8d8d8"/>
<rect x="1104.20" y="660.85" width="68.40" height="1.30" fill="#807f80"/>
<rect x="1104.20" y="692.65" width="68.40" height="1.30" fill="#807f80"/>
<rect x="1104.20" y="724.45" width="68.40" height="1.30" fill="#807f80"/>
<rect x="1104.20" y="756.25" width="68.40" height="1.30" fill="#807f80"/>
<rect x="1104.20" y="788.05" width="68.40" height="1.30" fill="#807f80"/>
<rect x="1130.80" y="566.70" width="9.70" height="253.40" fill="#000"/>
<rect x="1188.20" y="494.20" width="12.70" height="16.20" fill="#6f1511"/>
<rect x="1188.20" y="514.50" width="12.70" height="16.20" fill="#6e4212"/>
<rect x="1188.20" y="534.80" width="12.70" height="16.20" fill="#6e4212"/>
<rect x="1188.20" y="555.10" width="12.70" height="16.20" fill="#6e4212"/>
<rect x="1188.20" y="575.40" width="12.70" height="16.20" fill="#6e4212"/>
<rect x="1188.20" y="595.70" width="12.70" height="16.20" fill="#6e4212"/>
<rect x="1188.20" y="616.00" width="12.70" height="16.20" fill="#6e4212"/>
<rect x="1188.20" y="636.30" width="12.70" height="16.20" fill="#6e4212"/>
<rect x="1188.20" y="656.60" width="12.70" height="16.20" fill="#6e4212"/>
<rect x="1188.20" y="676.90" width="12.70" height="16.20" fill="#6e4212"/>
<rect x="1188.20" y="697.20" width="12.70" height="16.20" fill="#6e4212"/>
<rect x="1188.20" y="717.50" width="12.70" height="16.20" fill="#c0260f"/>
<rect x="1188.20" y="737.80" width="12.70" height="16.20" fill="#2a3a15"/>
<rect x="1188.20" y="758.10" width="12.70" height="16.20" fill="#2a3a15"/>
<rect x="1188.20" y="778.40" width="12.70" height="16.20" fill="#2a3a15"/>
<rect x="1188.20" y="798.70" width="12.70" height="16.20" fill="#2a3a15"/>
<rect x="1188.20" y="819.00" width="12.70" height="16.20" fill="#2a3a15"/>
<rect x="1188.20" y="839.30" width="12.70" height="16.20" fill="#2a3a15"/>
<rect x="1188.20" y="859.60" width="12.70" height="16.20" fill="#2a3a15"/>
<rect x="1188.20" y="879.90" width="12.70" height="16.20" fill="#2a3a15"/>
<rect x="1204.80" y="494.20" width="6.20" height="8.40" fill="#701515"/>
<rect x="1204.80" y="504.72" width="6.20" height="8.40" fill="#701515"/>
<rect x="1204.80" y="515.24" width="6.20" height="8.40" fill="#701515"/>
<rect x="1204.80" y="525.76" width="6.20" height="8.40" fill="#701515"/>
<rect x="1204.80" y="536.28" width="6.20" height="8.40" fill="#701515"/>
<rect x="1204.80" y="546.80" width="6.20" height="8.40" fill="#701515"/>
<rect x="1204.80" y="557.32" width="6.20" height="8.40" fill="#701515"/>
<rect x="1204.80" y="567.84" width="6.20" height="8.40" fill="#701515"/>
<rect x="1204.80" y="578.36" width="6.20" height="8.40" fill="#701515"/>
<rect x="1204.80" y="588.88" width="6.20" height="8.40" fill="#701515"/>
<rect x="1215.10" y="494.20" width="6.20" height="5.80" fill="#701515"/>
<rect x="1215.10" y="501.68" width="6.20" height="5.80" fill="#701515"/>
<rect x="1215.10" y="509.16" width="6.20" height="5.80" fill="#701515"/>
<rect x="1215.10" y="516.64" width="6.20" height="5.80" fill="#701515"/>
<rect x="1215.10" y="524.12" width="6.20" height="5.80" fill="#701515"/>
<rect x="1215.10" y="531.60" width="6.20" height="5.80" fill="#701515"/>
<rect x="1215.10" y="539.08" width="6.20" height="5.80" fill="#701515"/>
<rect x="1215.10" y="546.56" width="6.20" height="5.80" fill="#701515"/>
<rect x="1215.10" y="554.04" width="6.20" height="5.80" fill="#701515"/>
<rect x="1215.10" y="561.52" width="6.20" height="5.80" fill="#701515"/>
<rect x="1215.10" y="569.00" width="6.20" height="5.80" fill="#701515"/>
<rect x="1215.10" y="576.48" width="6.20" height="5.80" fill="#701515"/>
<rect x="1215.10" y="583.96" width="6.20" height="5.80" fill="#701515"/>
<rect x="1215.10" y="591.44" width="6.20" height="5.80" fill="#701515"/>
<rect x="1215.10" y="598.92" width="6.20" height="5.80" fill="#701515"/>
<rect x="1215.10" y="606.40" width="6.20" height="5.80" fill="#701515"/>
<rect x="1215.10" y="613.88" width="6.20" height="5.80" fill="#701515"/>
<rect x="1215.10" y="621.36" width="6.20" height="5.80" fill="#701515"/>
<rect x="1215.10" y="628.84" width="6.20" height="5.80" fill="#701515"/>
<rect x="1236.40" y="171.30" width="172.40" height="113.70" fill="#585b69"/>
<rect x="1237.40" y="172.30" width="170.40" height="111.70" fill="#525563"/>
<rect x="1236.40" y="295.45" width="172.40" height="113.70" fill="#5a4a4c"/>
<rect x="1237.40" y="296.45" width="170.40" height="111.70" fill="#521310"/>
<rect x="1236.40" y="419.60" width="172.40" height="113.70" fill="#585b69"/>
<rect x="1237.40" y="420.60" width="170.40" height="111.70" fill="#525563"/>
<rect x="1236.40" y="543.75" width="172.40" height="113.70" fill="#585b69"/>
<rect x="1237.40" y="544.75" width="170.40" height="111.70" fill="#525563"/>
<rect x="1419.10" y="171.30" width="172.40" height="113.70" fill="#585b69"/>
<rect x="1420.10" y="172.30" width="170.40" height="111.70" fill="#525563"/>
<rect x="1419.10" y="295.45" width="172.40" height="113.70" fill="#585b69"/>
<rect x="1420.10" y="296.45" width="170.40" height="111.70" fill="#525563"/>
<rect x="1419.10" y="419.60" width="172.40" height="113.70" fill="#585b69"/>
<rect x="1420.10" y="420.60" width="170.40" height="111.70" fill="#525563"/>
<rect x="1418.70" y="543.55" width="173.20" height="114.30" fill="#00ee00"/>
<rect x="1421.10" y="545.95" width="168.40" height="109.50" fill="#282828"/>
<rect x="1419.10" y="667.90" width="172.40" height="113.70" fill="#585b69"/>
<rect x="1420.10" y="668.90" width="170.40" height="111.70" fill="#525563"/>
<rect x="1419.10" y="792.05" width="172.40" height="113.70" fill="#585b69"/>
<rect x="1420.10" y="793.05" width="170.40" height="111.70" fill="#525563"/>
<path d="M1378.4 576.4H1393V600.8H1403L1385.6 625.1L1368.3 600.8H1378.4Z" fill="#e8e8e8"/>
<use href="#knob" x="18.50" y="642.00"/>
<use href="#knob" x="172.20" y="762.00"/>
<use href="#knob" x="325.90" y="599.70"/>
<use href="#knob" x="479.60" y="611.20"/>
<use href="#knob" x="633.30" y="560.60"/>
<use href="#knob" x="787.00" y="604.00"/>
<use href="#knob" x="940.70" y="572.30"/>
<use href="#knob" x="1094.40" y="696.70"/>
</svg>
<svg class="a" style="left:0;top:0" width="1600" height="62" viewBox="0 0 1600 62">
<g fill="#fff">
<rect x="20.8" y="6.9" width="48.6" height="49.8" rx="2.2" fill="none" stroke="#fff" stroke-width="1.8"/>
<rect x="27.3" y="15.6" width="3.1" height="32.2"/><rect x="42.6" y="15.6" width="3.1" height="32.2"/><rect x="58.6" y="15.6" width="3.1" height="32.2"/>
<rect x="25.3" y="27.8" width="7.2" height="8"/><rect x="40.6" y="34" width="7.2" height="8"/><rect x="56.6" y="23.8" width="7.2" height="8"/>
<rect x="87.5" y="14" width="35" height="35.1" fill="none" stroke="#fff" stroke-width="3.8"/>
<text font-family="Liberation Sans, sans-serif" font-weight="bold" y="38.4"><tspan x="91.7" font-size="20.5" textLength="8.6" lengthAdjust="spacingAndGlyphs">&lt;</tspan><tspan x="101.9" y="38.9" font-size="23.5" font-weight="normal" stroke="#fff" stroke-width="0.5" textLength="7.4" lengthAdjust="spacingAndGlyphs">/</tspan><tspan x="109.7" y="38.4" font-size="20.5" textLength="8.6" lengthAdjust="spacingAndGlyphs">&gt;</tspan></text>
<circle cx="166.2" cy="15" r="5"/><rect x="164" y="15" width="4.4" height="36"/><rect x="161.2" y="50" width="10" height="5"/>
<circle cx="152.2" cy="34" r="5.6"/>
<path d="M153.5 36.5 Q158 45.5 166.2 46" fill="none" stroke="#fff" stroke-width="3.4"/>
<circle cx="177.4" cy="26" r="3.6" fill="none" stroke="#fff" stroke-width="3"/>
<path d="M178.5 29.5 Q177 37 166.2 38.2" fill="none" stroke="#fff" stroke-width="3"/>
</g>
<g fill="none" stroke="#fff">
<circle cx="1251" cy="32.3" r="17.2" stroke-width="4.8"/>
<path d="M1250.4 24.2V33.9H1258.6" stroke-width="4.7" stroke-linecap="round" stroke-linejoin="round"/>
<path d="M1238.4 47.2L1235.8 51.5M1263.6 47.2L1266.2 51.5" stroke-width="4.2" stroke-linecap="round"/>
</g>
<g fill="#fff">
<path d="M1229.6 20.4A7.9 7.9 0 0 1 1242.8 12.6Z" stroke="#fff" stroke-width="1" stroke-linejoin="round"/><path d="M1272.4 20.4A7.9 7.9 0 0 0 1259.2 12.6Z" stroke="#fff" stroke-width="1" stroke-linejoin="round"/>
</g>
<clipPath id="wc"><path d="M1311.7 41.6L1261.7 1.4V-5H1361.7V1.4Z"/></clipPath>
<g fill="none" stroke="#fff" stroke-width="3.2" clip-path="url(#wc)">
<circle cx="1311.7" cy="36.1" r="29"/><circle cx="1311.7" cy="36.1" r="22.2"/><circle cx="1311.7" cy="36.1" r="15.4"/><circle cx="1311.7" cy="36.1" r="8.7"/>
</g>
<path d="M1303.4 37.2L1311 46.9H1306.8V53.9H1300V46.9H1295.7Z" fill="#757573"/>
<path d="M1316.2 39.8H1323.8V47.6H1328.3L1320.1 57.3L1312 47.6H1316.2Z" fill="#fff" stroke="#212121" stroke-width="1.2" paint-order="stroke"/>
<rect x="1351" y="43.2" width="7.4" height="8.7" fill="#fff"/>
<g fill="#686866"><rect x="1361.8" y="36.6" width="6.8" height="15.3"/><rect x="1371.7" y="30" width="6.8" height="21.9"/><rect x="1381.7" y="23.1" width="6.8" height="28.8"/><rect x="1391.7" y="15" width="6.8" height="36.9"/></g>
<path d="M1420.6 17.1H1470.7V45.2H1420.6V37H1415.6V25.2H1420.6Z" fill="none" stroke="#fff" stroke-width="1.6"/>
<rect x="1424.8" y="21" width="41.8" height="20" fill="#6a6a68"/>
<path d="M1450.8 21.8L1438.2 32.6H1444.6L1439.6 41.2L1453.8 29.6H1447Z" fill="#fff"/>
</svg>
<svg class="a" style="left:0;top:62px" width="1600" height="100" viewBox="0 62 1600 100">
<rect x="36" y="77" width="69.5" height="71" rx="3" fill="#0e93b0"/>
<rect x="38.6" y="79.6" width="64.3" height="65.8" fill="#2a2a34"/>
<g fill="#0c0c0e"><rect x="45.9" y="94" width="1.3" height="40"/><rect x="67.9" y="94" width="1.3" height="40"/><rect x="90.3" y="94" width="1.5" height="40"/></g>
<g stroke-width="1.9" stroke-dasharray="1.5 0.6" fill="none">
<path d="M53.7 94V115.5M75.5 94V115.5M97.8 94V115.5" stroke="#e8b010"/>
<path d="M53.7 115.5V142M75.5 115.5V142M97.8 115.5V142" stroke="#7ee010"/>
</g>
<linearGradient id="ik" x1="0" y1="0" x2="0" y2="1"><stop offset="0" stop-color="#9a9a9a"/><stop offset="0.25" stop-color="#f4f4f4"/><stop offset="0.5" stop-color="#d0d0d0"/><stop offset="0.8" stop-color="#f0f0f0"/><stop offset="1" stop-color="#8a8a8a"/></linearGradient><rect x="65" y="117" width="6.2" height="10" rx="0.8" fill="url(#ik)"/><rect x="87.8" y="112.4" width="6.2" height="10" rx="0.8" fill="url(#ik)"/>
<rect x="45.5" y="84" width="60" height="10" rx="5" fill="#0e93b0"/><rect x="98" y="84" width="7.5" height="10" fill="#0e93b0"/>
<rect x="36" y="103" width="34.6" height="13" rx="5" fill="#0e93b0"/><rect x="36" y="103" width="8" height="13" fill="#0e93b0"/>
<g fill="#fff" font-family="Liberation Sans, sans-serif">
<text x="48.4" y="92.2" font-size="8.2" textLength="53.5" lengthAdjust="spacingAndGlyphs">Mixing Station</text>
<text x="41.6" y="114.8" font-size="13.4" textLength="24.4" lengthAdjust="spacingAndGlyphs">X32</text>
<text font-size="47.4" font-weight="bold" fill="#c2c2c0" stroke="#c2c2c0" stroke-width="2" stroke-linejoin="miter" y="128.5"><tspan x="1218.5" textLength="26.8" lengthAdjust="spacingAndGlyphs">F</tspan><tspan x="1247.9" textLength="33.8" lengthAdjust="spacingAndGlyphs">X</tspan></text>
</g>
<g fill="#d8d6d8">
<rect x="949.5" y="80.5" width="7.5" height="64"/><rect x="966.2" y="100" width="7.5" height="44.5"/><rect x="983" y="120.5" width="7.5" height="24"/>
<rect x="1087" y="82" width="12.3" height="11.8"/><rect x="1103.8" y="82" width="12.3" height="11.8"/><rect x="1120.8" y="82" width="12.3" height="11.8"/>
<rect x="1087" y="98.3" width="12.3" height="11.8"/><rect x="1103.8" y="98.3" width="12.3" height="11.8"/><rect x="1120.8" y="98.3" width="12.3" height="11.8"/>
<rect x="1087" y="114.6" width="12.3" height="11.8"/><rect x="1103.8" y="114.6" width="12.3" height="11.8"/><rect x="1120.8" y="114.6" width="12.3" height="11.8"/>
<rect x="1103.8" y="130.8" width="12.3" height="11.8"/>
<path d="M1353.5 87.2H1376L1381.3 96.1H1416.3V103H1426.4L1416.1 137.7H1353.5Z"/>
</g>
<path d="M1358.4 119L1363.5 102.3H1426" fill="none" stroke="#1b1b1b" stroke-width="1.8"/>
<g fill="#8e908c"><rect x="1524" y="87.2" width="13" height="12.6"/><rect x="1524" y="106" width="13" height="12.5"/><rect x="1524" y="125" width="13" height="12.7"/></g>
</svg>
<header>
<div class="t" style="left:0;top:13px;font-size:41.0px;transform:translateX(1486.59px) scaleX(0.9606)">19:32</div>
<div class="t" style="left:0;top:75px;font-size:40.5px;transform:translateX(120.31px) scaleX(0.9917)">Main View</div>
<div class="t" style="left:0;top:125px;font-size:29.6px;transform:translateX(120.93px) scaleX(1.0046);color:#c4c4c4">LR Mix</div>
</header>
<main>
<section id="strip1">
<div class="a" style="left:76.10px;top:170.00px;width:71.20px;height:21.70px;overflow:hidden"><div class="t" style="left:0;top:1px;font-size:25.8px;transform:translateX(28.33px) scaleX(0.8446)">G</div></div>
<div class="a" style="left:76.10px;top:195.00px;width:71.20px;height:22.00px;overflow:hidden"><div class="t" style="left:0;top:0px;font-size:25.8px;transform:translateX(28.19px) scaleX(0.8714)">D</div></div>
<div class="a" style="left:2.50px;top:195.00px;width:70.80px;height:22.00px;overflow:hidden"><div class="t" style="left:0;top:2px;font-size:25.8px;transform:translateX(21.87px) scaleX(0.8348)">EQ</div></div>
<div class="t" style="left:0;top:262px;font-size:25.0px;transform:translateX(48.31px) scaleX(0.9935);color:#000">Bass</div>
<div class="t" style="left:0;top:425px;font-size:25.8px;transform:translateX(45.03px) scaleX(0.9544);color:#ececec">MUTE</div>
<div class="t" style="left:0;top:495px;font-size:26.8px;transform:translateX(31.10px) scaleX(0.8942)">-12.1</div>
<div class="t" style="left:0;top:555px;font-size:20.9px;transform:translateX(7.24px) scaleX(0.9617);color:#a0a0a0;-webkit-text-stroke:0">10</div>
<div class="t" style="left:0;top:586px;font-size:20.9px;transform:translateX(6.87px) scaleX(0.9582);color:#a0a0a0;-webkit-text-stroke:0">5</div>
<div class="t" style="left:0;top:618px;font-size:20.9px;transform:translateX(6.55px) scaleX(0.9952);color:#a0a0a0;-webkit-text-stroke:0">0</div>
<div class="t" style="left:0;top:650px;font-size:20.9px;transform:translateX(6.87px) scaleX(0.9582);color:#a0a0a0;-webkit-text-stroke:0">5</div>
<div class="t" style="left:0;top:681px;font-size:20.9px;transform:translateX(7.24px) scaleX(0.9617);color:#a0a0a0;-webkit-text-stroke:0">10</div>
<div class="t" style="left:0;top:713px;font-size:20.9px;transform:translateX(6.31px) scaleX(1.0070);color:#a0a0a0;-webkit-text-stroke:0">20</div>
<div class="t" style="left:0;top:744px;font-size:20.9px;transform:translateX(6.65px) scaleX(0.9921);color:#a0a0a0;-webkit-text-stroke:0">30</div>
<div class="t" style="left:0;top:776px;font-size:20.9px;transform:translateX(6.75px) scaleX(0.9876);color:#a0a0a0;-webkit-text-stroke:0">50</div>
<div class="t" style="left:0;top:875px;font-size:26.9px;transform:translateX(24.84px) scaleX(0.9236)">CH 09</div>
</section>
<section id="strip2">
<div class="a" style="left:229.80px;top:170.00px;width:71.20px;height:21.70px;overflow:hidden"><div class="t" style="left:0;top:1px;font-size:25.8px;transform:translateX(28.33px) scaleX(0.8446)">G</div></div>
<div class="a" style="left:229.80px;top:195.00px;width:71.20px;height:22.00px;overflow:hidden"><div class="t" style="left:0;top:0px;font-size:25.8px;transform:translateX(28.19px) scaleX(0.8714)">D</div></div>
<div class="a" style="left:156.20px;top:195.00px;width:70.80px;height:22.00px;overflow:hidden"><div class="t" style="left:0;top:2px;font-size:25.8px;transform:translateX(21.87px) scaleX(0.8348)">EQ</div></div>
<div class="t" style="left:0;top:262px;font-size:25.0px;transform:translateX(203.68px) scaleX(0.9138);color:#000">Git 1</div>
<div class="t" style="left:0;top:425px;font-size:25.8px;transform:translateX(198.73px) scaleX(0.9544);color:#ececec">MUTE</div>
<div class="a" style="left:0;top:0"><div class="t" style="left:0;top:495px;font-size:26.8px;transform:translateX(195.87px) scaleX(0.8147)">-</div><div class="t" style="left:0;top:488px;font-size:41.0px;transform:translateX(203.84px) scaleX(0.9061);-webkit-text-stroke:0">∞</div></div>
<div class="t" style="left:0;top:555px;font-size:20.9px;transform:translateX(160.94px) scaleX(0.9617);color:#a0a0a0;-webkit-text-stroke:0">10</div>
<div class="t" style="left:0;top:586px;font-size:20.9px;transform:translateX(160.57px) scaleX(0.9582);color:#a0a0a0;-webkit-text-stroke:0">5</div>
<div class="t" style="left:0;top:618px;font-size:20.9px;transform:translateX(160.25px) scaleX(0.9952);color:#a0a0a0;-webkit-text-stroke:0">0</div>
<div class="t" style="left:0;top:650px;font-size:20.9px;transform:translateX(160.57px) scaleX(0.9582);color:#a0a0a0;-webkit-text-stroke:0">5</div>
<div class="t" style="left:0;top:681px;font-size:20.9px;transform:translateX(160.94px) scaleX(0.9617);color:#a0a0a0;-webkit-text-stroke:0">10</div>
<div class="t" style="left:0;top:713px;font-size:20.9px;transform:translateX(160.01px) scaleX(1.0070);color:#a0a0a0;-webkit-text-stroke:0">20</div>
<div class="t" style="left:0;top:744px;font-size:20.9px;transform:translateX(160.35px) scaleX(0.9921);color:#a0a0a0;-webkit-text-stroke:0">30</div>
<div class="t" style="left:0;top:776px;font-size:20.9px;transform:translateX(160.45px) scaleX(0.9876);color:#a0a0a0;-webkit-text-stroke:0">50</div>
<div class="t" style="left:0;top:875px;font-size:26.9px;transform:translateX(178.34px) scaleX(0.9184)">CH 10</div>
</section>
<section id="strip3">
<div class="a" style="left:383.50px;top:170.00px;width:71.20px;height:21.70px;overflow:hidden"><div class="t" style="left:0;top:1px;font-size:25.8px;transform:translateX(28.33px) scaleX(0.8446)">G</div></div>
<div class="a" style="left:383.50px;top:195.00px;width:71.20px;height:22.00px;overflow:hidden"><div class="t" style="left:0;top:0px;font-size:25.8px;transform:translateX(28.19px) scaleX(0.8714)">D</div></div>
<div class="a" style="left:309.90px;top:195.00px;width:70.80px;height:22.00px;overflow:hidden"><div class="t" style="left:0;top:2px;font-size:25.8px;transform:translateX(21.87px) scaleX(0.8348)">EQ</div></div>
<div class="t" style="left:0;top:262px;font-size:25.0px;transform:translateX(357.35px) scaleX(0.9781);color:#000">Git 2</div>
<div class="t" style="left:0;top:425px;font-size:25.8px;transform:translateX(352.43px) scaleX(0.9544);color:#ececec">MUTE</div>
<div class="t" style="left:0;top:495px;font-size:26.8px;transform:translateX(344.46px) scaleX(0.9401)">-4.4</div>
<div class="t" style="left:0;top:555px;font-size:20.9px;transform:translateX(314.64px) scaleX(0.9617);color:#a0a0a0;-webkit-text-stroke:0">10</div>
<div class="t" style="left:0;top:586px;font-size:20.9px;transform:translateX(314.27px) scaleX(0.9582);color:#a0a0a0;-webkit-text-stroke:0">5</div>
<div class="t" style="left:0;top:618px;font-size:20.9px;transform:translateX(313.95px) scaleX(0.9952);color:#a0a0a0;-webkit-text-stroke:0">0</div>
<div class="t" style="left:0;top:650px;font-size:20.9px;transform:translateX(314.27px) scaleX(0.9582);color:#a0a0a0;-webkit-text-stroke:0">5</div>
<div class="t" style="left:0;top:681px;font-size:20.9px;transform:translateX(314.64px) scaleX(0.9617);color:#a0a0a0;-webkit-text-stroke:0">10</div>
<div class="t" style="left:0;top:713px;font-size:20.9px;transform:translateX(313.71px) scaleX(1.0070);color:#a0a0a0;-webkit-text-stroke:0">20</div>
<div class="t" style="left:0;top:744px;font-size:20.9px;transform:translateX(314.05px) scaleX(0.9921);color:#a0a0a0;-webkit-text-stroke:0">30</div>
<div class="t" style="left:0;top:776px;font-size:20.9px;transform:translateX(314.15px) scaleX(0.9876);color:#a0a0a0;-webkit-text-stroke:0">50</div>
<div class="t" style="left:0;top:875px;font-size:26.9px;transform:translateX(331.60px) scaleX(0.9145)">CH 11</div>
</section>
<section id="strip4">
<div class="a" style="left:537.20px;top:170.00px;width:71.20px;height:21.70px;overflow:hidden"><div class="t" style="left:0;top:1px;font-size:25.8px;transform:translateX(28.33px) scaleX(0.8446)">G</div></div>
<div class="a" style="left:537.20px;top:195.00px;width:71.20px;height:22.00px;overflow:hidden"><div class="t" style="left:0;top:0px;font-size:25.8px;transform:translateX(28.19px) scaleX(0.8714)">D</div></div>
<div class="a" style="left:463.60px;top:195.00px;width:70.80px;height:22.00px;overflow:hidden"><div class="t" style="left:0;top:2px;font-size:25.8px;transform:translateX(21.87px) scaleX(0.8348)">EQ</div></div>
<div class="t" style="left:0;top:262px;font-size:25.0px;transform:translateX(510.87px) scaleX(0.9682);color:#000">Git 3</div>
<div class="t" style="left:0;top:425px;font-size:25.8px;transform:translateX(506.13px) scaleX(0.9544);color:#ececec">MUTE</div>
<div class="t" style="left:0;top:495px;font-size:26.8px;transform:translateX(498.71px) scaleX(0.9490)">-6.2</div>
<div class="t" style="left:0;top:555px;font-size:20.9px;transform:translateX(468.34px) scaleX(0.9617);color:#a0a0a0;-webkit-text-stroke:0">10</div>
<div class="t" style="left:0;top:586px;font-size:20.9px;transform:translateX(467.97px) scaleX(0.9582);color:#a0a0a0;-webkit-text-stroke:0">5</div>
<div class="t" style="left:0;top:618px;font-size:20.9px;transform:translateX(467.65px) scaleX(0.9952);color:#a0a0a0;-webkit-text-stroke:0">0</div>
<div class="t" style="left:0;top:650px;font-size:20.9px;transform:translateX(467.97px) scaleX(0.9582);color:#a0a0a0;-webkit-text-stroke:0">5</div>
<div class="t" style="left:0;top:681px;font-size:20.9px;transform:translateX(468.34px) scaleX(0.9617);color:#a0a0a0;-webkit-text-stroke:0">10</div>
<div class="t" style="left:0;top:713px;font-size:20.9px;transform:translateX(467.41px) scaleX(1.0070);color:#a0a0a0;-webkit-text-stroke:0">20</div>
<div class="t" style="left:0;top:744px;font-size:20.9px;transform:translateX(467.75px) scaleX(0.9921);color:#a0a0a0;-webkit-text-stroke:0">30</div>
<div class="t" style="left:0;top:776px;font-size:20.9px;transform:translateX(467.85px) scaleX(0.9876);color:#a0a0a0;-webkit-text-stroke:0">50</div>
<div class="t" style="left:0;top:875px;font-size:26.9px;transform:translateX(485.84px) scaleX(0.9236)">CH 12</div>
</section>
<section id="strip5">
<div class="a" style="left:690.90px;top:170.00px;width:71.20px;height:21.70px;overflow:hidden"><div class="t" style="left:0;top:1px;font-size:25.8px;transform:translateX(28.33px) scaleX(0.8446)">G</div></div>
<div class="a" style="left:690.90px;top:195.00px;width:71.20px;height:22.00px;overflow:hidden"><div class="t" style="left:0;top:0px;font-size:25.8px;transform:translateX(28.19px) scaleX(0.8714)">D</div></div>
<div class="a" style="left:617.30px;top:195.00px;width:70.80px;height:22.00px;overflow:hidden"><div class="t" style="left:0;top:2px;font-size:25.8px;transform:translateX(21.87px) scaleX(0.8348)">EQ</div></div>
<div class="t" style="left:0;top:262px;font-size:25.0px;transform:translateX(661.00px) scaleX(0.9689);color:#000">Voc L</div>
<div class="t" style="left:0;top:425px;font-size:25.8px;transform:translateX(659.83px) scaleX(0.9544);color:#ececec">MUTE</div>
<div class="t" style="left:0;top:495px;font-size:26.8px;transform:translateX(649.04px) scaleX(0.9641)">+1.8</div>
<div class="t" style="left:0;top:555px;font-size:20.9px;transform:translateX(622.04px) scaleX(0.9617);color:#a0a0a0;-webkit-text-stroke:0">10</div>
<div class="t" style="left:0;top:586px;font-size:20.9px;transform:translateX(621.67px) scaleX(0.9582);color:#a0a0a0;-webkit-text-stroke:0">5</div>
<div class="t" style="left:0;top:618px;font-size:20.9px;transform:translateX(621.35px) scaleX(0.9952);color:#a0a0a0;-webkit-text-stroke:0">0</div>
<div class="t" style="left:0;top:650px;font-size:20.9px;transform:translateX(621.67px) scaleX(0.9582);color:#a0a0a0;-webkit-text-stroke:0">5</div>
<div class="t" style="left:0;top:681px;font-size:20.9px;transform:translateX(622.04px) scaleX(0.9617);color:#a0a0a0;-webkit-text-stroke:0">10</div>
<div class="t" style="left:0;top:713px;font-size:20.9px;transform:translateX(621.11px) scaleX(1.0070);color:#a0a0a0;-webkit-text-stroke:0">20</div>
<div class="t" style="left:0;top:744px;font-size:20.9px;transform:translateX(621.45px) scaleX(0.9921);color:#a0a0a0;-webkit-text-stroke:0">30</div>
<div class="t" style="left:0;top:776px;font-size:20.9px;transform:translateX(621.55px) scaleX(0.9876);color:#a0a0a0;-webkit-text-stroke:0">50</div>
<div class="t" style="left:0;top:875px;font-size:26.9px;transform:translateX(639.09px) scaleX(0.9236)">CH 13</div>
</section>
<section id="strip6">
<div class="a" style="left:844.60px;top:170.00px;width:71.20px;height:21.70px;overflow:hidden"><div class="t" style="left:0;top:1px;font-size:25.8px;transform:translateX(28.33px) scaleX(0.8446)">G</div></div>
<div class="a" style="left:844.60px;top:195.00px;width:71.20px;height:22.00px;overflow:hidden"><div class="t" style="left:0;top:0px;font-size:25.8px;transform:translateX(28.19px) scaleX(0.8714)">D</div></div>
<div class="a" style="left:771.00px;top:195.00px;width:70.80px;height:22.00px;overflow:hidden"><div class="t" style="left:0;top:2px;font-size:25.8px;transform:translateX(21.87px) scaleX(0.8348)">EQ</div></div>
<div class="t" style="left:0;top:262px;font-size:25.0px;transform:translateX(814.00px) scaleX(0.9494);color:#000">Voc C</div>
<div class="t" style="left:0;top:425px;font-size:25.8px;transform:translateX(813.53px) scaleX(0.9544);color:#ececec">MUTE</div>
<div class="t" style="left:0;top:495px;font-size:26.8px;transform:translateX(806.52px) scaleX(0.8756)">-5.1</div>
<div class="t" style="left:0;top:555px;font-size:20.9px;transform:translateX(775.74px) scaleX(0.9617);color:#a0a0a0;-webkit-text-stroke:0">10</div>
<div class="t" style="left:0;top:586px;font-size:20.9px;transform:translateX(775.37px) scaleX(0.9582);color:#a0a0a0;-webkit-text-stroke:0">5</div>
<div class="t" style="left:0;top:618px;font-size:20.9px;transform:translateX(775.05px) scaleX(0.9952);color:#a0a0a0;-webkit-text-stroke:0">0</div>
<div class="t" style="left:0;top:650px;font-size:20.9px;transform:translateX(775.37px) scaleX(0.9582);color:#a0a0a0;-webkit-text-stroke:0">5</div>
<div class="t" style="left:0;top:681px;font-size:20.9px;transform:translateX(775.74px) scaleX(0.9617);color:#a0a0a0;-webkit-text-stroke:0">10</div>
<div class="t" style="left:0;top:713px;font-size:20.9px;transform:translateX(774.81px) scaleX(1.0070);color:#a0a0a0;-webkit-text-stroke:0">20</div>
<div class="t" style="left:0;top:744px;font-size:20.9px;transform:translateX(775.15px) scaleX(0.9921);color:#a0a0a0;-webkit-text-stroke:0">30</div>
<div class="t" style="left:0;top:776px;font-size:20.9px;transform:translateX(775.25px) scaleX(0.9876);color:#a0a0a0;-webkit-text-stroke:0">50</div>
<div class="t" style="left:0;top:875px;font-size:26.9px;transform:translateX(793.34px) scaleX(0.9217)">CH 14</div>
</section>
<section id="strip7">
<div class="a" style="left:998.30px;top:170.00px;width:71.20px;height:21.70px;overflow:hidden"><div class="t" style="left:0;top:1px;font-size:25.8px;transform:translateX(28.33px) scaleX(0.8446)">G</div></div>
<div class="a" style="left:998.30px;top:195.00px;width:71.20px;height:22.00px;overflow:hidden"><div class="t" style="left:0;top:0px;font-size:25.8px;transform:translateX(28.19px) scaleX(0.8714)">D</div></div>
<div class="a" style="left:924.70px;top:195.00px;width:70.80px;height:22.00px;overflow:hidden"><div class="t" style="left:0;top:2px;font-size:25.8px;transform:translateX(21.87px) scaleX(0.8348)">EQ</div></div>
<div class="t" style="left:0;top:262px;font-size:25.0px;transform:translateX(967.00px) scaleX(0.9456);color:#000">Voc R</div>
<div class="t" style="left:0;top:425px;font-size:25.8px;transform:translateX(967.23px) scaleX(0.9544);color:#ececec">MUTE</div>
<div class="t" style="left:0;top:495px;font-size:26.8px;transform:translateX(959.46px) scaleX(0.9490)">-0.2</div>
<div class="t" style="left:0;top:555px;font-size:20.9px;transform:translateX(929.44px) scaleX(0.9617);color:#a0a0a0;-webkit-text-stroke:0">10</div>
<div class="t" style="left:0;top:586px;font-size:20.9px;transform:translateX(929.07px) scaleX(0.9582);color:#a0a0a0;-webkit-text-stroke:0">5</div>
<div class="t" style="left:0;top:618px;font-size:20.9px;transform:translateX(928.75px) scaleX(0.9952);color:#a0a0a0;-webkit-text-stroke:0">0</div>
<div class="t" style="left:0;top:650px;font-size:20.9px;transform:translateX(929.07px) scaleX(0.9582);color:#a0a0a0;-webkit-text-stroke:0">5</div>
<div class="t" style="left:0;top:681px;font-size:20.9px;transform:translateX(929.44px) scaleX(0.9617);color:#a0a0a0;-webkit-text-stroke:0">10</div>
<div class="t" style="left:0;top:713px;font-size:20.9px;transform:translateX(928.51px) scaleX(1.0070);color:#a0a0a0;-webkit-text-stroke:0">20</div>
<div class="t" style="left:0;top:744px;font-size:20.9px;transform:translateX(928.85px) scaleX(0.9921);color:#a0a0a0;-webkit-text-stroke:0">30</div>
<div class="t" style="left:0;top:776px;font-size:20.9px;transform:translateX(928.95px) scaleX(0.9876);color:#a0a0a0;-webkit-text-stroke:0">50</div>
<div class="t" style="left:0;top:875px;font-size:26.9px;transform:translateX(946.59px) scaleX(0.9236)">CH 15</div>
</section>
<section id="strip8">
<div class="a" style="left:1152.00px;top:170.00px;width:71.20px;height:21.70px;overflow:hidden"><div class="t" style="left:0;top:1px;font-size:25.8px;transform:translateX(28.33px) scaleX(0.8446)">G</div></div>
<div class="a" style="left:1152.00px;top:195.00px;width:71.20px;height:22.00px;overflow:hidden"><div class="t" style="left:0;top:0px;font-size:25.8px;transform:translateX(28.19px) scaleX(0.8714)">D</div></div>
<div class="a" style="left:1078.40px;top:195.00px;width:70.80px;height:22.00px;overflow:hidden"><div class="t" style="left:0;top:2px;font-size:25.8px;transform:translateX(21.87px) scaleX(0.8348)">EQ</div></div>
<div class="t" style="left:0;top:262px;font-size:25.0px;transform:translateX(1120.25px) scaleX(0.9440);color:#000">Voc O</div>
<div class="t" style="left:0;top:425px;font-size:25.8px;transform:translateX(1120.93px) scaleX(0.9544);color:#ececec">MUTE</div>
<div class="t" style="left:0;top:495px;font-size:26.8px;transform:translateX(1106.95px) scaleX(0.9508)">-29.2</div>
<div class="t" style="left:0;top:555px;font-size:20.9px;transform:translateX(1083.14px) scaleX(0.9617);color:#a0a0a0;-webkit-text-stroke:0">10</div>
<div class="t" style="left:0;top:586px;font-size:20.9px;transform:translateX(1082.77px) scaleX(0.9582);color:#a0a0a0;-webkit-text-stroke:0">5</div>
<div class="t" style="left:0;top:618px;font-size:20.9px;transform:translateX(1082.45px) scaleX(0.9952);color:#a0a0a0;-webkit-text-stroke:0">0</div>
<div class="t" style="left:0;top:650px;font-size:20.9px;transform:translateX(1082.77px) scaleX(0.9582);color:#a0a0a0;-webkit-text-stroke:0">5</div>
<div class="t" style="left:0;top:681px;font-size:20.9px;transform:translateX(1083.14px) scaleX(0.9617);color:#a0a0a0;-webkit-text-stroke:0">10</div>
<div class="t" style="left:0;top:713px;font-size:20.9px;transform:translateX(1082.21px) scaleX(1.0070);color:#a0a0a0;-webkit-text-stroke:0">20</div>
<div class="t" style="left:0;top:744px;font-size:20.9px;transform:translateX(1082.55px) scaleX(0.9921);color:#a0a0a0;-webkit-text-stroke:0">30</div>
<div class="t" style="left:0;top:776px;font-size:20.9px;transform:translateX(1082.65px) scaleX(0.9876);color:#a0a0a0;-webkit-text-stroke:0">50</div>
<div class="t" style="left:0;top:875px;font-size:26.9px;transform:translateX(1100.84px) scaleX(0.9236)">CH 16</div>
</section>
</main>
<aside>
<div class="t" style="left:0;top:216px;font-size:25.6px;transform:translateX(1301.11px) scaleX(0.9687);color:#e8e8e8">Fine</div>
<div class="t" style="left:0;top:340px;font-size:25.6px;transform:translateX(1257.22px) scaleX(0.9666);color:#e8e8e8">Mute Enable</div>
<div class="t" style="left:0;top:465px;font-size:25.6px;transform:translateX(1260.71px) scaleX(0.9305);color:#e8e8e8">Snd-&gt;Fader</div>
<div class="t" style="left:0;top:588px;font-size:23.1px;transform:translateX(1241.07px) scaleX(0.9877);color:#e8e8e8">Mon Drums</div>
<div class="t" style="left:0;top:216px;font-size:25.6px;transform:translateX(1462.00px) scaleX(0.9230);color:#e8e8e8">DCA 1-8</div>
<div class="t" style="left:0;top:340px;font-size:25.6px;transform:translateX(1455.73px) scaleX(0.9357);color:#e8e8e8">CH 17-24</div>
<div class="t" style="left:0;top:464px;font-size:25.6px;transform:translateX(1469.65px) scaleX(0.9182);color:#e8e8e8">CH 1-8</div>
<div class="t" style="left:0;top:588px;font-size:25.6px;transform:translateX(1463.13px) scaleX(0.9346);color:#fff">CH 9-16</div>
<div class="t" style="left:0;top:712px;font-size:25.6px;transform:translateX(1475.85px) scaleX(0.9777);color:#e8e8e8">AuxIn</div>
<div class="t" style="left:0;top:836px;font-size:25.6px;transform:translateX(1455.72px) scaleX(0.9392);color:#e8e8e8">CH 25-32</div>
</aside>
</div>
</body></html>
